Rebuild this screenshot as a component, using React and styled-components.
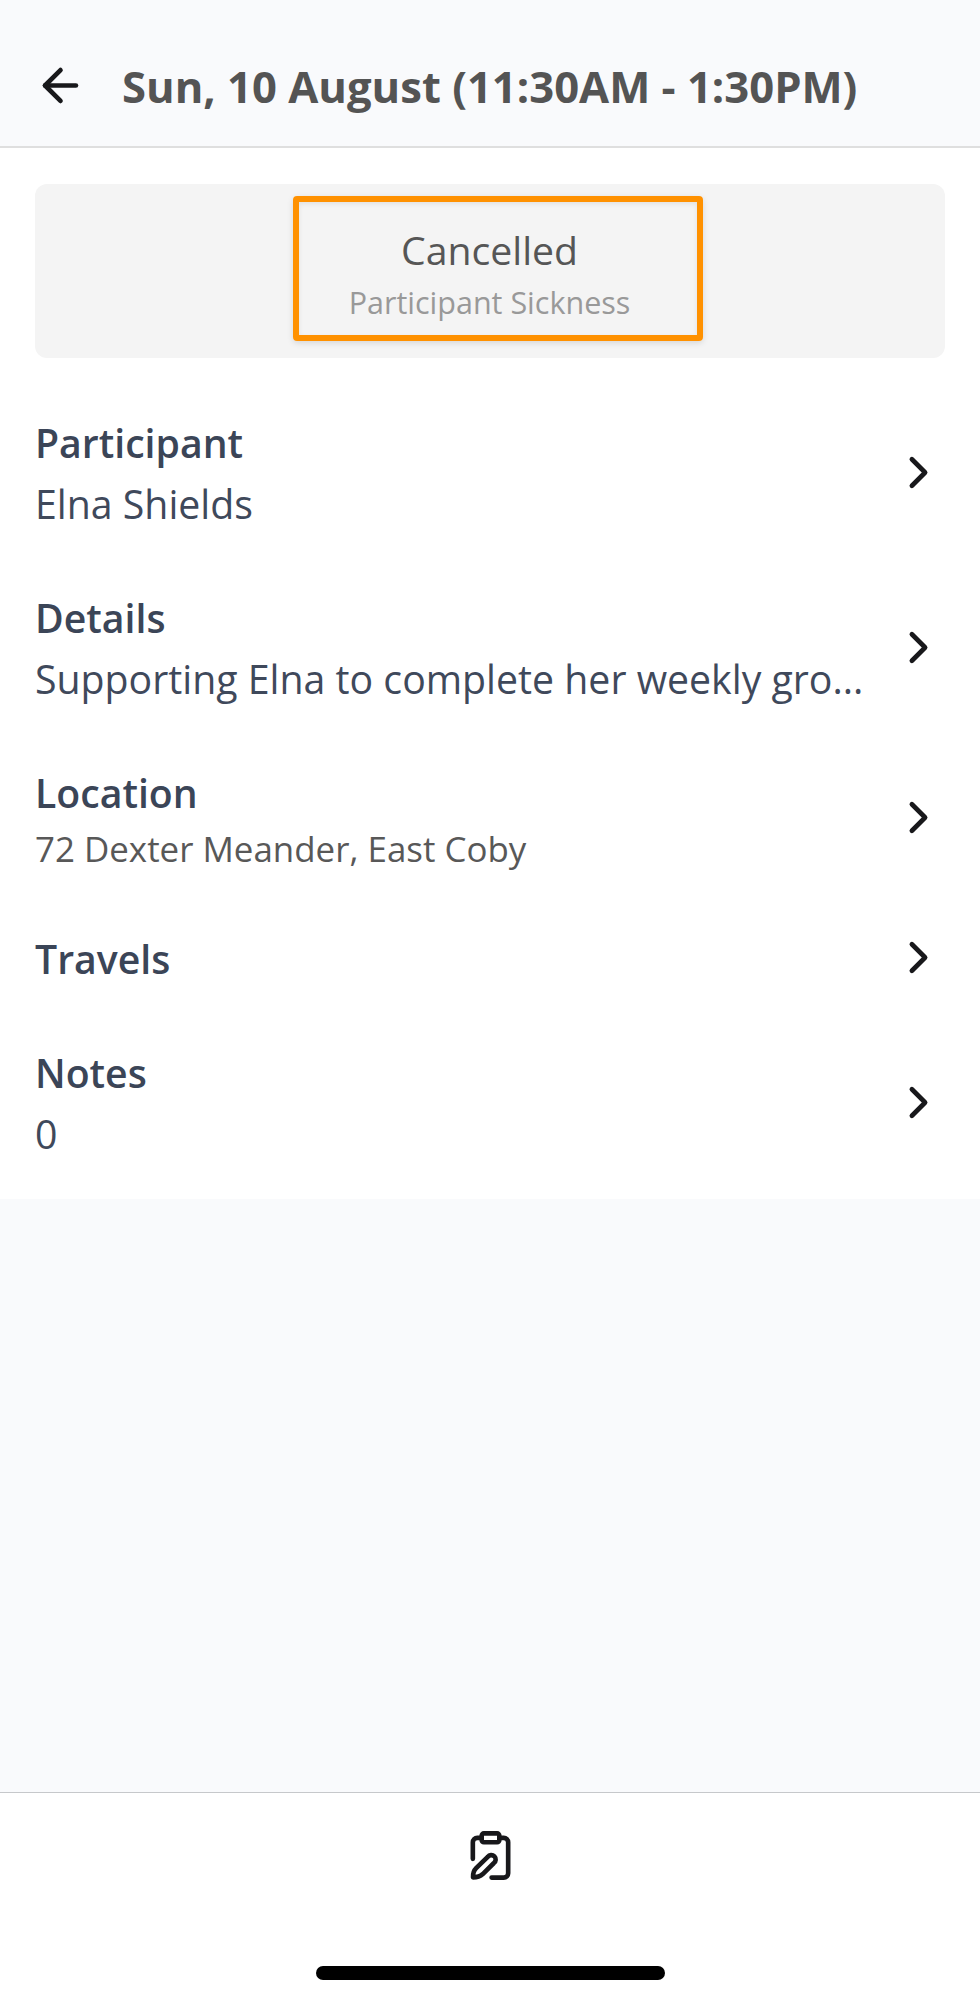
import React from "react";
import styled, { createGlobalStyle } from "styled-components";
import { ArrowLeft, ChevronRight } from "lucide-react";

//#region Styled Components
const GlobalStyle = createGlobalStyle`
  * {
    box-sizing: border-box;
  }
  body {
    margin: 0;
    background: #f9fafc;
    font-family: "Open Sans", "Noto Sans", sans-serif;
  }
`;
const Screen = styled.div`
  display: flex;
  flex-flow: column nowrap;
  width: 980px;
  height: 1999px;
  background: #f9fafc;
  color: #3b4557;
`;
const Header = styled.header`
  display: flex;
  align-items: center;
  height: 148px;
  padding: 24px 34px 0;
  border-bottom: 2px solid #dfdfdf;
`;
const IconButton = styled.button`
  display: flex;
  padding: 0;
  border: none;
  background: none;
  color: #18181b;
`;
const Title = styled.h1`
  margin: 1px 0 0 35px;
  color: #545454;
  font-size: 43.6px;
  font-weight: 700;
  line-height: 60px;
  white-space: nowrap;
`;
const Content = styled.main`
  padding: 36px 35px 35px;
  background: white;
`;
const StatusCard = styled.section`
  display: flex;
  justify-content: center;
  height: 174px;
  padding: 12px 0 0 16px;
  border-radius: 12px;
  background: #f4f4f4;
`;
const Highlight = styled.div`
  display: flex;
  flex-flow: column nowrap;
  align-items: center;
  width: 410px;
  height: 145px;
  padding: 20px 17px 0 0;
  border: 6px solid #ff9100;
  border-radius: 4px;
  box-shadow: 0 2px 6px rgba(0, 0, 0, 0.12), inset 0 2px 5px rgba(0, 0, 0, 0.08);
`;
const Status = styled.span`
  color: #565656;
  font-size: 39.2px;
  line-height: 56px;
`;
const Reason = styled.span`
  color: #999;
  font-size: 30.5px;
  line-height: 48px;
`;
const List = styled.div`
  display: flex;
  flex-flow: column nowrap;
  gap: 51px;
  margin-top: 52px;
`;
const Row = styled.div`
  display: flex;
  justify-content: space-between;
  align-items: center;
`;
const RowText = styled.div`
  width: 832px;
  padding-top: 2px;
`;
const Label = styled.h2`
  margin: 0;
  font-size: 39.2px;
  font-weight: 600;
  line-height: 61px;
`;
const Value = styled.p`
  margin: 0;
  color: ${props => (props.$small ? "#585858" : "#3f495b")};
  font-size: ${props => (props.$small ? "34.9px" : "39.25px")};
  line-height: ${props => (props.$small ? "52px" : "61px")};
  white-space: nowrap;
`;
const Footer = styled.footer`
  display: flex;
  flex-flow: column nowrap;
  justify-content: space-between;
  align-items: center;
  height: 207px;
  margin-top: auto;
  padding: 36px 0 19px;
  border-top: 1px solid #c6c8cb;
  background: white;
`;
const HomeIndicator = styled.div`
  width: 349px;
  height: 14px;
  border-radius: 7px;
  background: black;
`;
//#endregion

const rows = [
  { label: "Participant", value: "Elna Shields" },
  { label: "Details", value: "Supporting Elna to complete her weekly gro..." },
  { label: "Location", value: "72 Dexter Meander, East Coby", small: true },
  { label: "Travels" },
  { label: "Notes", value: "0" }
];

const ClipboardIcon = () => (
  <svg
    width="53"
    height="53"
    viewBox="0 0 24 24"
    fill="none"
    stroke="currentColor"
    strokeWidth="2.1"
    strokeLinecap="round"
    strokeLinejoin="round"
  >
    <rect x="8" y="2" width="8" height="4" rx="1" />
    <path d="M10.75 12.6a2 2 0 1 1 2.8 2.8L8.5 20.4C7.3 21.5 5.6 21.9 4.1 21.9C4 20.4 4.4 18.8 5.5 17.7Z" />
    <path d="M16 4h2a2 2 0 0 1 2 2v14a2 2 0 0 1-2 2h-5.5" />
    <path d="M4 13.5V6a2 2 0 0 1 2-2h2" />
  </svg>
);

const DetailRow = ({ label, value, small }) => (
  <Row>
    <RowText>
      <Label>{label}</Label>
      {value && <Value $small={small}>{value}</Value>}
    </RowText>
    <ChevronRight size={53} strokeWidth={2.1} color="#18181b" />
  </Row>
);

const App = () => {
  return (
    <Screen>
      <GlobalStyle />
      <Header>
        <IconButton aria-label="Back">
          <ArrowLeft size={53} strokeWidth={2.1} />
        </IconButton>
        <Title>Sun, 10 August (11:30AM - 1:30PM)</Title>
      </Header>
      <Content>
        <StatusCard>
          <Highlight>
            <Status>Cancelled</Status>
            <Reason>Participant Sickness</Reason>
          </Highlight>
        </StatusCard>
        <List>
          {rows.map(row => (
            <DetailRow key={row.label} {...row} />
          ))}
        </List>
      </Content>
      <Footer>
        <IconButton aria-label="Edit notes">
          <ClipboardIcon />
        </IconButton>
        <HomeIndicator />
      </Footer>
    </Screen>
  );
};

export default App;
